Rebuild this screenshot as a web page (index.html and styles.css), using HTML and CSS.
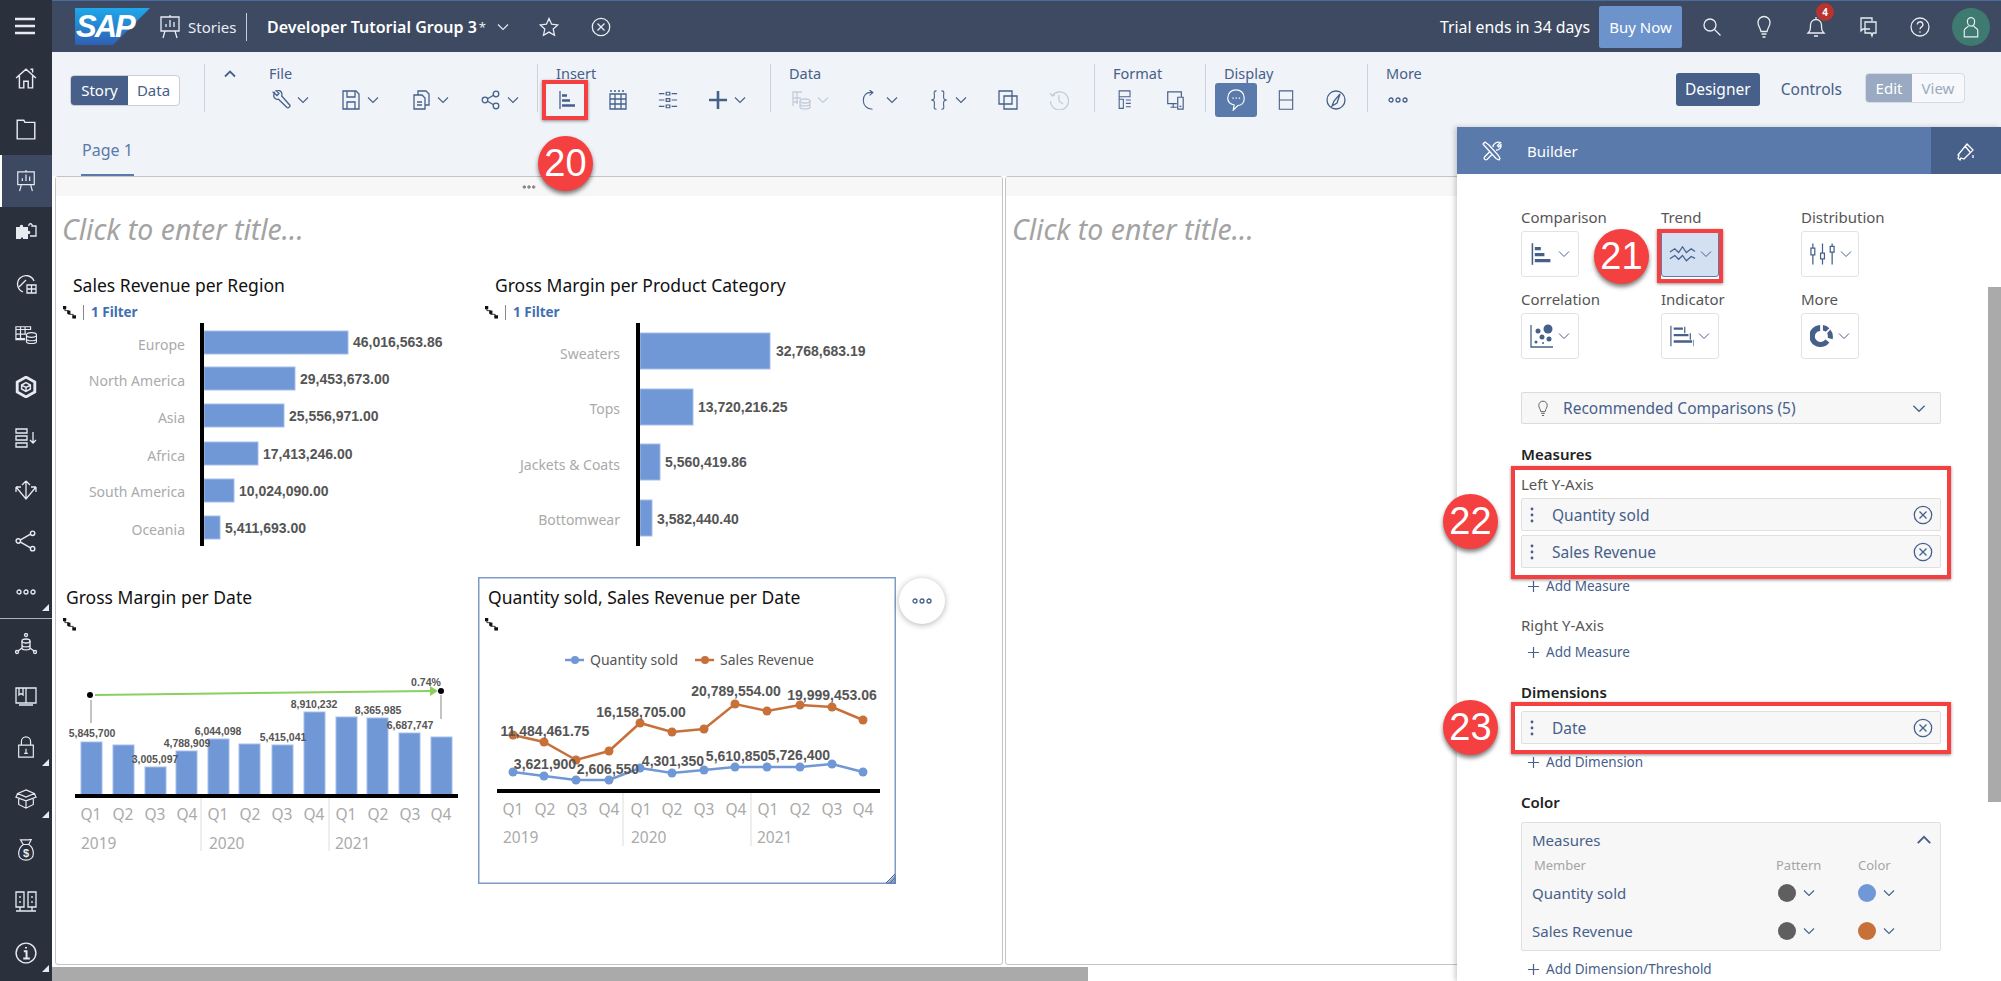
FILE: index.html
```html
<!DOCTYPE html>
<html lang="en">
<head>
    <meta charset="UTF-8">
    <meta name="viewport" content="width=device-width, initial-scale=1.0">
    <title>Developer Tutorial Group 3 - Stories</title>
    <link rel="stylesheet" href="styles.css">
</head>
<body>
<svg class="sprite" aria-hidden="true">
    <symbol id="i-chev" viewBox="0 0 12 8"><path d="M1 1.5l5 5 5-5"/></symbol>
    <symbol id="i-menu" viewBox="0 0 20 20"><path class="thick" d="M0 3h20M0 10h20M0 17h20"/></symbol>
    <symbol id="i-stories" viewBox="0 0 20 24"><path d="M1 2h18v14H1zM10 0v2M5 16l-2 7M15 16l2 7M6 12V9M10 12V5M14 12V7"/></symbol>
    <symbol id="i-star" viewBox="0 0 20 20"><path d="M10 1.5l2.6 5.7 6.2.7-4.6 4.2 1.3 6.1L10 15.100l-5.500 3.100 1.300-6.100L1.200 7.900l6.200-.7z"/></symbol>
    <symbol id="i-xcircle" viewBox="0 0 20 20"><circle cx="10" cy="10" r="8.700"/><path d="M6.500 6.500l7 7M13.500 6.500l-7 7"/></symbol>
    <symbol id="i-search" viewBox="0 0 20 20"><circle cx="8" cy="8" r="6"/><path d="M12.500 12.500l6 6"/></symbol>
    <symbol id="i-bulb" viewBox="0 0 20 24"><path d="M7 16.500C6 12 4 11 4 7.500a6 6 0 0 1 12 0c0 3.500-2 4.500-3 9zM7.500 19h5M8.500 22h3"/></symbol>
    <symbol id="i-bell" viewBox="0 0 20 24"><path d="M2 18c2-2 2.500-3 2.500-8a5.500 5.500 0 0 1 11 0c0 5 .5 6 2.500 8zM8 21h4M10 2v2"/></symbol>
    <symbol id="i-chat" viewBox="0 0 20 22"><path d="M12 13H5l-2 2V2h11v3M7 6h11v11h-3l-1 3-1-3H7z"/></symbol>
    <symbol id="i-help" viewBox="0 0 20 20"><circle cx="10" cy="10" r="9"/><path d="M7.300 7.500a2.800 2.800 0 1 1 4 2.600c-.9.500-1.300 1-1.300 2.200M10 14.300v1.500"/></symbol>
    <symbol id="i-user" viewBox="0 0 20 28"><path d="M6 7.500a4 4 0 0 1 8 0c0 3-1.500 5.500-4 5.500S6 10.500 6 7.500zM7 13c-1 2-4.500 2-4.500 5v7h15v-7c0-3-3.500-3-4.500-5"/></symbol>
    <symbol id="i-wrench" viewBox="0 0 20 20"><path d="M2.500 2.500l3.500 3 2-2-3-3.200c3-.8 6 1 6 4.200l-.3 1.500 8 9c1 1.300-1.300 3.500-2.700 2.500l-8.500-8.300c-3 1-6.300-2.300-4-6.700z"/></symbol>
    <symbol id="i-save" viewBox="0 0 20 20"><path d="M2 1h13l3 3v15H2zM6 1v6h8V1M6 19v-7h8v7"/></symbol>
    <symbol id="i-copy" viewBox="0 0 20 20"><path d="M7 5V1h8l3 3v11h-4M3 5h8l3 3v11H3zM6 12h5M6 15h5"/></symbol>
    <symbol id="i-share" viewBox="0 0 20 20"><circle cx="4" cy="10" r="2.800"/><circle cx="15" cy="4" r="2.800"/><circle cx="15" cy="16" r="2.800"/><path d="M6.500 8.700L12.500 5.300M6.500 11.300l6 3.400"/></symbol>
    <symbol id="i-bars" viewBox="0 0 20 20"><path d="M2 1v18"/><path class="thick" d="M4 5.500h5M4 10.500h8M4 15.500h13"/></symbol>
    <symbol id="i-table" viewBox="0 0 20 20"><path d="M2 4h16v15H2zM2 9h16M2 14h16M7 4v15M13 4v15"/><path stroke-dasharray="2 2" d="M2 1h16"/></symbol>
    <symbol id="i-sliders" viewBox="0 0 22 20"><path d="M1 3h6M15 3h6M1 10h6M15 10h6M1 17h6M15 17h6M9 1.500h4v3H9zM9 8.500h4v3H9zM9 15.500h4v3H9z"/></symbol>
    <symbol id="i-plus" viewBox="0 0 20 20"><path class="thick" d="M10 1v18M1 10h18"/></symbol>
    <symbol id="i-plus-thin" viewBox="0 0 14 14"><path d="M7 1v12M1 7h12"/></symbol>
    <symbol id="i-db" viewBox="0 0 20 20"><path d="M2 16V2h9M2 8h8M2 12h5M6 2v12"/><ellipse cx="14" cy="11" rx="5" ry="2"/><path d="M9 11v6c0 2.600 10 2.600 10 0v-6M9 14c0 2.600 10 2.600 10 0"/></symbol>
    <symbol id="i-refresh" viewBox="0 0 20 24"><path d="M13 3C5 2 2 7 2 12.500S6 23 13 23M9.500 0l4 3-4 3.500"/></symbol>
    <symbol id="i-braces" viewBox="0 0 20 24"><path d="M7 1C3 1 4.500 4 4.500 7.500S4 11 1.500 12C4 13 4.500 13 4.500 16.500S3 23 7 23M13 1c4 0 2.500 3 2.500 6.500S16 11 18.500 12c-2.500 1-3 1-3 4.500S17 23 13 23"/></symbol>
    <symbol id="i-layers" viewBox="0 0 20 20"><path d="M1 1h13v13H1z"/><path d="M6 6h13v13H6z"/></symbol>
    <symbol id="i-history" viewBox="0 0 20 20"><path d="M3 6a9 9 0 1 1-1.500 5M1 3l2 3 3-1M10 5v6l4 3"/></symbol>
    <symbol id="i-format" viewBox="0 0 16 24"><path d="M1 1h13v7H1zM1 8v14h5V11H1M9 12h6M9 16h6M9 20h6"/></symbol>
    <symbol id="i-device" viewBox="0 0 20 22"><path d="M12 15H2V2h15v6M5 19h7M8 15v4M13 8h6v13h-6zM15 18h2"/></symbol>
    <symbol id="i-comment" viewBox="0 0 20 24"><path d="M10 1c5 0 9 3 9 9s-4 8-7 8l-5 5 1-5.500C4 16.500 1 14 1 10c0-6 4-9 9-9z"/><path stroke-dasharray="1.500 2" d="M6 10h9"/></symbol>
    <symbol id="i-split" viewBox="0 0 20 24"><path d="M2 1h16v22H2zM2 12h16"/></symbol>
    <symbol id="i-compass" viewBox="0 0 20 20"><circle cx="10" cy="10" r="9"/><path d="M14 4L8 11l-2 5 5-3z"/></symbol>
    <symbol id="i-dots" viewBox="0 0 20 6"><circle cx="3" cy="3" r="2"/><circle cx="10" cy="3" r="2"/><circle cx="17" cy="3" r="2"/></symbol>
    <symbol id="i-tools" viewBox="0 0 20 20"><path d="M1 3l2-2 4 3 9.500 10.500 1.500 3-1 1.500-3-1.500L4.500 7zM11 6c0-3 4-6 7.500-4.500L15.500 4.500l1 1.500 2.500-2.500c.5 3-2 6-5 5.500M7.500 11l-5 5c-1 2 1 3.500 2.500 2.500l5-5"/></symbol>
    <symbol id="i-brush" viewBox="0 0 20 20"><path d="M2 14L11 3l6 6-9 9-3-1-1 2-2-2 1-2zM9 5l5 6M17 14v3"/></symbol>
    <symbol id="i-trend" viewBox="0 0 28 20"><path d="M1 8l5-3.500 4 4 4-6 4 6 5-4 4 3M1 15l5-3.500 4 4 4-4 4 5.500 5-4.500 4 2"/></symbol>
    <symbol id="i-candles" viewBox="0 0 28 24"><path d="M4 1v5M4 13v10M14 1v10M14 17v6M24 1v3M24 10v13M2 6h4v7H2zM12 11h4v6h-4zM22 4h4v6h-4z"/></symbol>
    <symbol id="i-scatter" viewBox="0 0 24 24"><path d="M1 1v22h22"/><g class="solid"><circle cx="18" cy="5" r="4.500"/><circle cx="8" cy="7" r="2.500"/><circle cx="12" cy="13" r="2.500"/><circle cx="19" cy="15" r="2.500"/><circle cx="6" cy="18" r="1.500"/><circle cx="13" cy="19" r="1"/></g></symbol>
    <symbol id="i-indicator" viewBox="0 0 26 24"><path d="M1 1v22M16 2v7M22 9v7M26 16v7"/><path class="thick" d="M4 4h10M4 11h16M4 18h20"/></symbol>
    <symbol id="i-donut" viewBox="0 0 26 26"><path class="solid" d="M11 1a12 12 0 1 0 10 19l-4.500-3.500a6 6 0 1 1-5.500-9zM14 1a12 12 0 0 1 7 3.500l-4 4a6 6 0 0 0-3-1.500zM22 6a12 12 0 0 1 2.500 10.500L19 15a6 6 0 0 0-.5-5z"/></symbol>
    <symbol id="i-grip" viewBox="0 0 4 16"><circle cx="2" cy="2" r="1.400"/><circle cx="2" cy="8" r="1.400"/><circle cx="2" cy="14" r="1.400"/></symbol>
    <symbol id="i-tree" viewBox="0 0 14 14"><path d="M2 2v3h4v4h5v3"/><rect class="solid" x="0" y="0" width="3.500" height="3.500"/><rect class="solid" x="4.500" y="5" width="3.500" height="3.500"/><rect class="solid" x="10" y="10" width="4" height="3.500"/></symbol>
    <symbol id="i-home" viewBox="0 0 20 20"><path d="M1 10l9-8 9 8M4 8v11h4v-6h4v6h4V8M14 2h2v3"/></symbol>
    <symbol id="i-folder" viewBox="0 0 20 20"><path d="M2 2h6l1 2h9v15H2z"/></symbol>
    <symbol id="i-puzzle" viewBox="0 0 22 20"><path class="solid" d="M1 5h4c-1-3 4-3 3 0h5v4c3-1 3 4 0 3v5H8c1-2-3-2-2 0H1z"/><path d="M14 4c-1-3 4-3 3 0h4v10h-6"/></symbol>
    <symbol id="i-gauge" viewBox="0 0 22 20"><path d="M8 18A8.500 8.500 0 1 1 19 7M4 13l7-7"/><path d="M12 11h9v8h-9zM12 15h9M16.500 11v8"/></symbol>
    <symbol id="i-datatable" viewBox="0 0 24 20"><path d="M1 1h16v3H1zM1 4v11h10M1 9h11M1 14h10M6 1v14M11 1v8"/><ellipse cx="18" cy="10" rx="5.500" ry="2.500"/><path d="M12.500 10v7c0 3 11 3 11 0v-7M12.500 14c0 3 11 3 11 0"/></symbol>
    <symbol id="i-hex" viewBox="0 0 20 20"><path class="thick" d="M10 1l8 4.500v9L10 19l-8-4.500v-9z"/><path d="M10 6l4 2.200v3.600L10 14l-4-2.200V8.200zM6 8.200l4 2.200 4-2.200M10 10.400V14"/></symbol>
    <symbol id="i-sortlist" viewBox="0 0 22 20"><path d="M1 1h11v4H1zM1 8h11v4H1zM1 15h11v4H1zM18 4v11M15 12l3 3 3-3"/></symbol>
    <symbol id="i-arrows" viewBox="0 0 22 20"><path d="M11 1v18M11 1L7 5M11 1l4 4M1 7l10 12 10-12M1 7v5M1 7h5M21 7v5M21 7h-5"/></symbol>
    <symbol id="i-network" viewBox="0 0 20 20"><circle cx="3" cy="10" r="2"/><circle cx="16" cy="3" r="2"/><circle cx="16" cy="17" r="2"/><path d="M5 9l9.500-5.500M5 11l9.500 5.500"/></symbol>
    <symbol id="i-dbnet" viewBox="0 0 22 22"><circle cx="11" cy="2" r="1.500"/><ellipse cx="11" cy="8" rx="4" ry="2"/><path d="M7 8v7c0 2.500 8 2.500 8 0V8M7 12c0 2.500 8 2.500 8 0M7 15l-4 3M15 15l4 3"/><circle cx="2" cy="19" r="1.500"/><circle cx="20" cy="19" r="1.500"/></symbol>
    <symbol id="i-book" viewBox="0 0 22 20"><path d="M1 2h20v15H1zM11 2v15M4 19h14M4 2v7l2-1.500L8 9V2"/></symbol>
    <symbol id="i-lock" viewBox="0 0 18 24"><path d="M1 10h16v13H1zM4 10V6a5 5 0 0 1 10 0v4M9 14v5M7 19h4"/></symbol>
    <symbol id="i-box" viewBox="0 0 24 22"><path d="M12 1l9 4-9 4-9-4zM3 5l-2 4 11 4 11-4-2-4M4 11v6l8 4 8-4v-6M12 13v8"/></symbol>
    <symbol id="i-money" viewBox="0 0 18 24"><path d="M6 6L3 1h9l3-1-3 6c5 3 5 8 5 10 0 5-4 7-8 7s-8-2-8-7c0-3 1-7 5-10zM6 6h6"/><text x="9" y="20" class="dollar">$</text></symbol>
    <symbol id="i-speakers" viewBox="0 0 22 22"><path d="M1 1h8v15H1zM13 1h8v15h-8zM5 16v4M17 16v4M1 20h20M5 5v2M17 5v2M5 10v2M17 10v2"/></symbol>
    <symbol id="i-info" viewBox="0 0 20 20"><circle cx="10" cy="10" r="9"/><path class="thick-sm" d="M8 8.500h2.500V15M7.500 15h6M10 4.500v1.500"/></symbol>
</svg>

<div class="app">
    <nav class="sidebar">
        <div class="side-top"><svg class="side-menu"><use href="#i-menu"/></svg></div>
        <a class="side-item"><svg><use href="#i-home"/></svg></a>
        <a class="side-item"><svg><use href="#i-folder"/></svg></a>
        <a class="side-item side-active"><svg><use href="#i-stories"/></svg></a>
        <a class="side-item"><svg><use href="#i-puzzle"/></svg></a>
        <a class="side-item"><svg><use href="#i-gauge"/></svg></a>
        <a class="side-item"><svg><use href="#i-datatable"/></svg></a>
        <a class="side-item"><svg><use href="#i-hex"/></svg></a>
        <a class="side-item"><svg><use href="#i-sortlist"/></svg></a>
        <a class="side-item"><svg><use href="#i-arrows"/></svg></a>
        <a class="side-item"><svg><use href="#i-network"/></svg></a>
        <a class="side-item side-more side-split"><svg class="side-dots"><use href="#i-dots"/></svg></a>
        <a class="side-item"><svg><use href="#i-dbnet"/></svg></a>
        <a class="side-item"><svg><use href="#i-book"/></svg></a>
        <a class="side-item side-more"><svg><use href="#i-lock"/></svg></a>
        <a class="side-item side-more"><svg><use href="#i-box"/></svg></a>
        <a class="side-item"><svg><use href="#i-money"/></svg></a>
        <a class="side-item"><svg><use href="#i-speakers"/></svg></a>
        <a class="side-item side-more"><svg><use href="#i-info"/></svg></a>
    </nav>

    <div class="main">
        <header class="topbar">
            <svg class="logo" viewBox="0 0 75 37">
                <defs>
                    <linearGradient id="logoFill" x1="0" y1="0" x2="0" y2="1">
                        <stop offset="0" stop-color="#1fa8ea"/>
                        <stop offset="1" stop-color="#2f5fb5"/>
                    </linearGradient>
                </defs>
                <polygon points="0,0 75,0 38,37 0,37" fill="url(#logoFill)"/>
                <text x="1" y="29" class="logo-text">SAP</text>
            </svg>
            <svg class="top-stories"><use href="#i-stories"/></svg>
            <span class="top-section">Stories</span>
            <span class="top-title">Developer Tutorial Group 3</span>
            <span class="top-star">*</span>
            <svg class="chev top-chev"><use href="#i-chev"/></svg>
            <svg class="top-icon top-fav"><use href="#i-star"/></svg>
            <svg class="top-icon top-close"><use href="#i-xcircle"/></svg>
            <span class="trial">Trial ends in 34 days</span>
            <button class="buy">Buy Now</button>
            <svg class="top-icon top-search"><use href="#i-search"/></svg>
            <svg class="top-icon top-tall"><use href="#i-bulb"/></svg>
            <span class="bell">
                <svg class="top-icon top-tall"><use href="#i-bell"/></svg>
                <span class="badge">4</span>
            </span>
            <svg class="top-icon top-tall top-chat"><use href="#i-chat"/></svg>
            <svg class="top-icon"><use href="#i-help"/></svg>
            <span class="avatar"><svg><use href="#i-user"/></svg></span>
        </header>

        <section class="toolbar">
            <div class="seg seg-story">
                <span class="seg-on">Story</span>
                <span class="seg-off">Data</span>
            </div>
            <div class="tb-group tb-file">
                <svg class="chev tb-collapse"><use href="#i-chev"/></svg>
                <div class="tb-label">File</div>
                <div class="tb-row tb-row-file">
                    <span class="tool"><svg><use href="#i-wrench"/></svg><svg class="chev"><use href="#i-chev"/></svg></span>
                    <span class="tool"><svg><use href="#i-save"/></svg><svg class="chev"><use href="#i-chev"/></svg></span>
                    <span class="tool"><svg><use href="#i-copy"/></svg><svg class="chev"><use href="#i-chev"/></svg></span>
                    <span class="tool"><svg><use href="#i-share"/></svg><svg class="chev"><use href="#i-chev"/></svg></span>
                </div>
            </div>
            <div class="tb-group tb-insert">
                <div class="tb-label">Insert</div>
                <div class="tb-row">
                    <span class="tool"><svg><use href="#i-bars"/></svg></span>
                    <span class="tool"><svg><use href="#i-table"/></svg></span>
                    <span class="tool"><svg><use href="#i-sliders"/></svg></span>
                    <span class="tool"><svg><use href="#i-plus"/></svg><svg class="chev"><use href="#i-chev"/></svg></span>
                </div>
            </div>
            <div class="tb-group tb-data">
                <div class="tb-label">Data</div>
                <div class="tb-row tb-row-data">
                    <span class="tool tool-off"><svg><use href="#i-db"/></svg><svg class="chev"><use href="#i-chev"/></svg></span>
                    <span class="tool"><svg><use href="#i-refresh"/></svg><svg class="chev"><use href="#i-chev"/></svg></span>
                    <span class="tool"><svg><use href="#i-braces"/></svg><svg class="chev"><use href="#i-chev"/></svg></span>
                    <span class="tool"><svg><use href="#i-layers"/></svg></span>
                    <span class="tool tool-off"><svg><use href="#i-history"/></svg></span>
                </div>
            </div>
            <div class="tb-group tb-format">
                <div class="tb-label">Format</div>
                <div class="tb-row">
                    <span class="tool"><svg><use href="#i-format"/></svg></span>
                    <span class="tool"><svg><use href="#i-device"/></svg></span>
                </div>
            </div>
            <div class="tb-group tb-display">
                <div class="tb-label">Display</div>
                <div class="tb-row">
                    <span class="tool tool-active"><svg><use href="#i-comment"/></svg></span>
                    <span class="tool"><svg><use href="#i-split"/></svg></span>
                    <span class="tool"><svg><use href="#i-compass"/></svg></span>
                </div>
            </div>
            <div class="tb-group tb-more">
                <div class="tb-label">More</div>
                <div class="tb-row"><svg class="tb-dots"><use href="#i-dots"/></svg></div>
            </div>
            <div class="tb-right">
                <span class="mode-on">Designer</span>
                <span class="mode-off">Controls</span>
                <div class="seg seg-edit">
                    <span class="seg-edit-on">Edit</span>
                    <span class="seg-edit-off">View</span>
                </div>
            </div>
        </section>

        <div class="tabs"><span class="tab">Page 1</span></div>

        <div class="canvas">
            <section class="story-panel">
                <div class="handle"><svg class="handle-dots"><use href="#i-dots"/></svg></div>
                <div class="placeholder">Click to enter title...</div>
                <div class="widgets">
                    <article class="widget">
                        <h2 class="w-title w-title-inset">Sales Revenue per Region</h2>
                        <div class="w-sub"><svg class="tree"><use href="#i-tree"/></svg><span class="w-filter">1 Filter</span></div>
                        <svg class="chart" viewBox="56 322 422 250">
                            <rect class="bar" x="204" y="331" width="144" height="23"/>
                            <rect class="bar" x="204" y="367" width="91" height="23"/>
                            <rect class="bar" x="204" y="404" width="80" height="23"/>
                            <rect class="bar" x="204" y="442" width="54" height="23"/>
                            <rect class="bar" x="204" y="479" width="30" height="23"/>
                            <rect class="bar" x="204" y="516" width="16" height="23"/>
                            <rect class="axis" x="200" y="323" width="4" height="223"/>
                            <text class="cat-bar end" x="185" y="350">Europe</text>
                            <text class="cat-bar end" x="185" y="386">North America</text>
                            <text class="cat-bar end" x="185" y="423">Asia</text>
                            <text class="cat-bar end" x="185" y="461">Africa</text>
                            <text class="cat-bar end" x="185" y="497">South America</text>
                            <text class="cat-bar end" x="185" y="535">Oceania</text>
                            <text class="val" x="353" y="347">46,016,563.86</text>
                            <text class="val" x="300" y="384">29,453,673.00</text>
                            <text class="val" x="289" y="421">25,556,971.00</text>
                            <text class="val" x="263" y="459">17,413,246.00</text>
                            <text class="val" x="239" y="496">10,024,090.00</text>
                            <text class="val" x="225" y="533">5,411,693.00</text>
                        </svg>
                    </article>

                    <article class="widget">
                        <h2 class="w-title w-title-inset">Gross Margin per Product Category</h2>
                        <div class="w-sub"><svg class="tree"><use href="#i-tree"/></svg><span class="w-filter">1 Filter</span></div>
                        <svg class="chart" viewBox="478 322 418 250">
                            <rect class="bar" x="640" y="333" width="130" height="36"/>
                            <rect class="bar" x="640" y="389" width="53" height="36"/>
                            <rect class="bar" x="640" y="444" width="20" height="36"/>
                            <rect class="bar" x="640" y="500" width="12" height="36"/>
                            <rect class="axis" x="636" y="323" width="4" height="223"/>
                            <text class="cat-bar end" x="620" y="359">Sweaters</text>
                            <text class="cat-bar end" x="620" y="414">Tops</text>
                            <text class="cat-bar end" x="620" y="470">Jackets &amp; Coats</text>
                            <text class="cat-bar end" x="620" y="525">Bottomwear</text>
                            <text class="val" x="776" y="356">32,768,683.19</text>
                            <text class="val" x="698" y="412">13,720,216.25</text>
                            <text class="val" x="665" y="467">5,560,419.86</text>
                            <text class="val" x="657" y="524">3,582,440.40</text>
                        </svg>
                    </article>

                    <article class="widget widget-low">
                        <h2 class="w-title">Gross Margin per Date</h2>
                        <div class="w-sub"><svg class="tree"><use href="#i-tree"/></svg></div>
                        <svg class="chart" viewBox="56 634 422 250">
                            <rect class="bar" x="81" y="742" width="21" height="53"/>
                            <rect class="bar" x="113" y="745" width="21" height="50"/>
                            <rect class="bar" x="145" y="767" width="21" height="28"/>
                            <rect class="bar" x="176" y="751" width="21" height="44"/>
                            <rect class="bar" x="208" y="739" width="21" height="56"/>
                            <rect class="bar" x="239" y="744" width="21" height="51"/>
                            <rect class="bar" x="272" y="745" width="21" height="50"/>
                            <rect class="bar" x="304" y="712" width="21" height="83"/>
                            <rect class="bar" x="336" y="717" width="21" height="78"/>
                            <rect class="bar" x="367" y="718" width="21" height="77"/>
                            <rect class="bar" x="399" y="733" width="21" height="62"/>
                            <rect class="bar" x="431" y="737" width="21" height="58"/>
                            <rect class="axis" x="75" y="794" width="383" height="4"/>
                            <path class="var-drop" d="M91 700v23M441 695v24"/>
                            <path class="var-line" d="M95 695L430 691"/>
                            <polygon class="var-head" points="430,686 438,691 430,696"/>
                            <circle cx="90" cy="695" r="3"/>
                            <circle cx="441" cy="691" r="3"/>
                            <text class="small mid" x="426" y="686">0.74%</text>
                            <text class="small mid" x="92" y="737">5,845,700</text>
                            <text class="small mid" x="155" y="763">3,005,097</text>
                            <text class="small mid" x="187" y="747">4,788,909</text>
                            <text class="small mid" x="218" y="735">6,044,098</text>
                            <text class="small mid" x="283" y="741">5,415,041</text>
                            <text class="small mid" x="314" y="708">8,910,232</text>
                            <text class="small mid" x="378" y="714">8,365,985</text>
                            <text class="small mid" x="410" y="729">6,687,747</text>
                            <g class="cat mid">
                                <text x="91" y="820">Q1</text><text x="123" y="820">Q2</text><text x="155" y="820">Q3</text><text x="187" y="820">Q4</text>
                                <text x="218" y="820">Q1</text><text x="250" y="820">Q2</text><text x="282" y="820">Q3</text><text x="314" y="820">Q4</text>
                                <text x="346" y="820">Q1</text><text x="378" y="820">Q2</text><text x="410" y="820">Q3</text><text x="441" y="820">Q4</text>
                            </g>
                            <text class="cat" x="81" y="849">2019</text>
                            <text class="cat" x="209" y="849">2020</text>
                            <text class="cat" x="335" y="849">2021</text>
                            <path class="sep" d="M201 798v53M329 798v53"/>
                        </svg>
                    </article>

                    <article class="widget widget-low widget-selected">
                        <h2 class="w-title">Quantity sold, Sales Revenue per Date</h2>
                        <div class="w-sub"><svg class="tree"><use href="#i-tree"/></svg></div>
                        <svg class="chart" viewBox="478 634 418 250">
                            <path class="leg-blue" d="M565 660h19"/>
                            <circle class="pt-blue" cx="575" cy="660" r="4"/>
                            <text class="legend" x="590" y="665">Quantity sold</text>
                            <path class="leg-orange" d="M695 660h19"/>
                            <circle class="pt-orange" cx="705" cy="660" r="4"/>
                            <text class="legend" x="720" y="665">Sales Revenue</text>
                            <polyline class="line-orange" points="513,735 544,742 576,760 609,751 640,723 672,732 704,729 735,704 767,711 800,705 832,707 863,720"/>
                            <polyline class="line-blue" points="513,772 544,776 576,780 609,780 640,768 672,773 704,770 735,767 767,767 800,767 832,764 863,772"/>
                            <g class="pt-orange">
                                <circle cx="513" cy="735" r="4.500"/><circle cx="544" cy="742" r="4.500"/><circle cx="576" cy="760" r="4.500"/><circle cx="609" cy="751" r="4.500"/>
                                <circle cx="640" cy="723" r="4.500"/><circle cx="672" cy="732" r="4.500"/><circle cx="704" cy="729" r="4.500"/><circle cx="735" cy="704" r="4.500"/>
                                <circle cx="767" cy="711" r="4.500"/><circle cx="800" cy="705" r="4.500"/><circle cx="832" cy="707" r="4.500"/><circle cx="863" cy="720" r="4.500"/>
                            </g>
                            <g class="pt-blue">
                                <circle cx="513" cy="772" r="4.500"/><circle cx="544" cy="776" r="4.500"/><circle cx="576" cy="780" r="4.500"/><circle cx="609" cy="780" r="4.500"/>
                                <circle cx="640" cy="768" r="4.500"/><circle cx="672" cy="773" r="4.500"/><circle cx="704" cy="770" r="4.500"/><circle cx="735" cy="767" r="4.500"/>
                                <circle cx="767" cy="767" r="4.500"/><circle cx="800" cy="767" r="4.500"/><circle cx="832" cy="764" r="4.500"/><circle cx="863" cy="772" r="4.500"/>
                            </g>
                            <g class="val mid">
                                <text x="545" y="736">11,484,461.75</text>
                                <text x="641" y="717">16,158,705.00</text>
                                <text x="736" y="696">20,789,554.00</text>
                                <text x="832" y="700">19,999,453.06</text>
                                <text x="545" y="769">3,621,900</text>
                                <text x="608" y="774">2,606,550</text>
                                <text x="673" y="766">4,301,350</text>
                                <text x="737" y="761">5,610,850</text>
                                <text x="799" y="760">5,726,400</text>
                            </g>
                            <rect class="axis" x="497" y="789" width="383" height="4"/>
                            <g class="cat mid">
                                <text x="513" y="815">Q1</text><text x="545" y="815">Q2</text><text x="577" y="815">Q3</text><text x="609" y="815">Q4</text>
                                <text x="641" y="815">Q1</text><text x="672" y="815">Q2</text><text x="704" y="815">Q3</text><text x="736" y="815">Q4</text>
                                <text x="768" y="815">Q1</text><text x="800" y="815">Q2</text><text x="832" y="815">Q3</text><text x="863" y="815">Q4</text>
                            </g>
                            <text class="cat" x="503" y="843">2019</text>
                            <text class="cat" x="631" y="843">2020</text>
                            <text class="cat" x="757" y="843">2021</text>
                            <path class="sep" d="M623 793v53M751 793v53"/>
                            <path class="grab" d="M886 883l9-9M890 883l5-5"/>
                            <polygon class="grab-fill" points="896,874 896,884 886,884"/>
                        </svg>
                        <button class="w-more"><svg><use href="#i-dots"/></svg></button>
                    </article>
                </div>
            </section>
            <section class="story-panel story-panel-second">
                <div class="handle"></div>
                <div class="placeholder">Click to enter title...</div>
            </section>
        </div>
        <div class="hscroll"><div class="hscroll-thumb"></div></div>

        <aside class="builder">
            <div class="b-head">
                <svg class="b-tools"><use href="#i-tools"/></svg>
                <span class="b-name">Builder</span>
                <span class="b-brush"><svg><use href="#i-brush"/></svg></span>
            </div>
            <div class="b-body">
                <div class="b-types">
                    <div class="b-type">Comparison<span class="b-pick"><svg><use href="#i-bars"/></svg><svg class="chev"><use href="#i-chev"/></svg></span></div>
                    <div class="b-type">Trend<span class="b-pick b-pick-on"><svg class="wide"><use href="#i-trend"/></svg><svg class="chev"><use href="#i-chev"/></svg></span></div>
                    <div class="b-type">Distribution<span class="b-pick"><svg class="wide"><use href="#i-candles"/></svg><svg class="chev"><use href="#i-chev"/></svg></span></div>
                    <div class="b-type">Correlation<span class="b-pick"><svg><use href="#i-scatter"/></svg><svg class="chev"><use href="#i-chev"/></svg></span></div>
                    <div class="b-type">Indicator<span class="b-pick"><svg><use href="#i-indicator"/></svg><svg class="chev"><use href="#i-chev"/></svg></span></div>
                    <div class="b-type">More<span class="b-pick"><svg><use href="#i-donut"/></svg><svg class="chev"><use href="#i-chev"/></svg></span></div>
                </div>
                <div class="b-rec">
                    <svg class="b-bulb"><use href="#i-bulb"/></svg>
                    <span>Recommended Comparisons (5)</span>
                    <svg class="chev b-rec-chev"><use href="#i-chev"/></svg>
                </div>
                <h3 class="b-h b-h-measures">Measures</h3>
                <div class="b-sub b-sub-left">Left Y-Axis</div>
                <div class="chip"><svg class="grip"><use href="#i-grip"/></svg><span>Quantity sold</span><svg class="chip-x"><use href="#i-xcircle"/></svg></div>
                <div class="chip chip-next"><svg class="grip"><use href="#i-grip"/></svg><span>Sales Revenue</span><svg class="chip-x"><use href="#i-xcircle"/></svg></div>
                <div class="b-add"><svg><use href="#i-plus-thin"/></svg>Add Measure</div>
                <div class="b-sub b-sub-right">Right Y-Axis</div>
                <div class="b-add b-add-right"><svg><use href="#i-plus-thin"/></svg>Add Measure</div>
                <h3 class="b-h b-h-dim">Dimensions</h3>
                <div class="chip"><svg class="grip"><use href="#i-grip"/></svg><span>Date</span><svg class="chip-x"><use href="#i-xcircle"/></svg></div>
                <div class="b-add"><svg><use href="#i-plus-thin"/></svg>Add Dimension</div>
                <h3 class="b-h b-h-color">Color</h3>
                <div class="color-box">
                    <div class="color-head"><span>Measures</span><svg class="chev color-up"><use href="#i-chev"/></svg></div>
                    <div class="color-cols"><span class="c-member">Member</span><span class="c-pattern">Pattern</span><span class="c-color">Color</span></div>
                    <div class="color-row">
                        <span class="c-member">Quantity sold</span>
                        <span class="c-pattern"><i class="dot dot-grey"></i><svg class="chev"><use href="#i-chev"/></svg></span>
                        <span class="c-color"><i class="dot dot-blue"></i><svg class="chev"><use href="#i-chev"/></svg></span>
                    </div>
                    <div class="color-row">
                        <span class="c-member">Sales Revenue</span>
                        <span class="c-pattern"><i class="dot dot-grey"></i><svg class="chev"><use href="#i-chev"/></svg></span>
                        <span class="c-color"><i class="dot dot-orange"></i><svg class="chev"><use href="#i-chev"/></svg></span>
                    </div>
                </div>
                <div class="b-add b-add-last"><svg><use href="#i-plus-thin"/></svg>Add Dimension/Threshold</div>
            </div>
            <div class="vscroll"></div>
        </aside>

        <!-- tutorial callouts -->
        <div class="mark mark-20"></div>
        <div class="mark mark-21"></div>
        <div class="mark mark-22"></div>
        <div class="mark mark-23"></div>
        <div class="step step-20">20</div>
        <div class="step step-21">21</div>
        <div class="step step-22">22</div>
        <div class="step step-23">23</div>
    </div>
</div>
</body>
</html>
```

FILE: styles.css
```css
* {
    box-sizing: border-box;
}
body {
    margin: 0;
    font-family: "Noto Sans", Arial, sans-serif;
    color: #46608a;
    background: #fff;
}
.sprite {
    display: none;
}
svg {
    fill: none;
    stroke: currentColor;
    stroke-width: 1.3;
}
.thick {
    stroke-width: 2.6;
}
.thick-sm {
    stroke-width: 1.8;
}
.solid {
    fill: currentColor;
    stroke: none;
}
.app {
    display: flex;
    width: 2001px;
    height: 981px;
    overflow: hidden;
}

/* left nav */
.sidebar {
    flex: 0 0 52px;
    background: #2a313d;
    color: #e6ebf2;
}
.side-top {
    height: 52px;
    display: flex;
    align-items: center;
    justify-content: center;
}
.side-menu {
    width: 20px;
    height: 20px;
    margin-right: 2px;
}
.side-item {
    position: relative;
    display: flex;
    align-items: center;
    justify-content: center;
    height: 51.5px;
}
.side-item svg {
    width: 22px;
    height: 22px;
}
.side-item .side-dots {
    height: 6px;
    width: 20px;
    fill: none;
}
.side-active {
    background: #3c4960;
    border-left: 2px solid #fff;
    padding-right: 2px;
}
.side-split {
    border-bottom: 1px solid #aab2bf;
}
.side-more::after {
    content: "";
    position: absolute;
    right: 3px;
    bottom: 7px;
    border-style: solid;
    border-width: 0 0 7px 7px;
    border-color: transparent transparent #e6ebf2 transparent;
}
.dollar {
    font: 700 12px "Liberation Sans", Arial, sans-serif;
    text-anchor: middle;
    fill: currentColor;
    stroke: none;
}

/* shell bar */
.main {
    position: relative;
    flex: 1;
    min-width: 0;
    background: #f0f3f8;
}
.topbar {
    display: flex;
    align-items: center;
    height: 52px;
    padding-left: 23px;
    background: #3d4a61;
    border-top: 1px solid #4b6a9d;
    color: #e9edf4;
}
.logo {
    width: 75px;
    height: 37px;
    stroke: none;
    flex: none;
}
.logo-text {
    font: italic 700 31px "Liberation Sans", Arial, sans-serif;
    letter-spacing: -2px;
    fill: #fff;
}
.top-stories {
    width: 20px;
    height: 24px;
    margin-left: 10px;
}
.top-section {
    margin-left: 8px;
    font-size: 15px;
    width: 59px;
    border-right: 1px solid #c8cfdb;
    line-height: 28px;
}
.top-title {
    margin-left: 20px;
    font-size: 16px;
    font-weight: 600;
    color: #fff;
    white-space: nowrap;
}
.top-star {
    margin-left: 2px;
    font-size: 13px;
}
.top-chev {
    margin-left: 11px;
}
.chev {
    flex: none;
    width: 12px;
    height: 8px;
    stroke-width: 1.1;
}
.top-icon {
    flex: none;
    width: 20px;
    height: 20px;
}
.top-tall {
    height: 24px;
}
.top-fav {
    margin-left: 30px;
}
.top-close {
    margin-left: 32px;
}
.trial {
    margin-left: auto;
    font-size: 15.800px;
    color: #fff;
    white-space: nowrap;
}
.buy {
    height: 42px;
    width: 83px;
    margin: 0 0 0 9px;
    padding: 0;
    border: 0;
    border-radius: 2px;
    background: #6c93cb;
    color: #fff;
    font: 15px "Noto Sans", Arial, sans-serif;
}
.top-search {
    margin: 0 32px 0 20px;
}
.bell {
    position: relative;
    display: flex;
    margin: 0 32px;
}
.top-chat {
    margin-right: 32px;
}
.badge {
    position: absolute;
    top: -12px;
    left: 10px;
    width: 18px;
    height: 18px;
    border-radius: 50%;
    background: #b8342f;
    color: #fff;
    font-size: 10px;
    font-weight: 700;
    line-height: 18px;
    text-align: center;
}
.avatar {
    display: flex;
    align-items: center;
    justify-content: center;
    width: 38px;
    height: 38px;
    margin: 0 11px 0 22px;
    border-radius: 50%;
    background: #3f7a70;
}
.avatar svg {
    width: 18px;
    height: 26px;
}

/* toolbar */
.toolbar {
    display: flex;
    align-items: flex-start;
    height: 80px;
    padding: 12px 36px 0 18px;
}
.seg {
    display: flex;
    flex: none;
    font-size: 15px;
    border-radius: 4px;
}
.seg-story {
    width: 110px;
    height: 31px;
    margin: 11px 24px 0 0;
    line-height: 29px;
    text-align: center;
    background: #fff;
    border: 1px solid #c9ced6;
}
.seg-on {
    width: 57px;
    background: #46608a;
    color: #fff;
    border-radius: 3px 0 0 3px;
}
.seg-off {
    flex: 1;
}
.tb-group {
    position: relative;
    flex: none;
    height: 48px;
    padding-left: 20px;
    border-left: 1px solid #ccd1da;
}
.tb-label {
    height: 18px;
    margin-left: -2px;
    font-size: 14.500px;
    line-height: 18px;
}
.tb-row {
    display: flex;
    align-items: center;
    gap: 30px;
    height: 20px;
    margin-top: 8px;
}
.tb-row-file {
    gap: 32px;
}
.tb-row-data {
    gap: 31px;
}
.tool {
    display: flex;
    align-items: center;
    gap: 6px;
}
.tool svg {
    width: 20px;
    height: 20px;
}
.tool .chev {
    width: 12px;
    height: 8px;
}
.tool-off {
    color: #c3ccd9;
}
.tool-active {
    margin: -8px -11px;
    padding: 6px 11px;
    border-radius: 3px;
    background: #5a7aab;
    color: #fff;
}
.tool-active svg {
    height: 22px;
}
.tb-file {
    padding-left: 66px;
    padding-right: 18px;
}
.tb-collapse {
    position: absolute;
    left: 19px;
    top: 6px;
    width: 12px;
    height: 8px;
    transform: scaleY(-1);
    stroke-width: 1.800;
}
.tb-insert {
    padding-right: 24px;
}
.tb-data {
    padding-right: 25px;
}
.tb-format {
    padding-right: 20px;
}
.tb-display {
    padding-right: 21px;
}
.tb-dots {
    width: 20px;
    height: 6px;
}
.tb-right {
    display: flex;
    align-items: flex-start;
    margin-left: auto;
    font-size: 15.500px;
}
.mode-on {
    width: 84px;
    height: 33px;
    margin-top: 9px;
    background: #46608a;
    color: #fff;
    line-height: 33px;
    text-align: center;
    border-radius: 3px;
}
.mode-off {
    margin: 9px 23px 0 21px;
    line-height: 33px;
}
.seg-edit {
    width: 100px;
    height: 30px;
    margin-top: 9px;
    line-height: 28px;
    text-align: center;
    background: #f6f8fb;
    border: 1px solid #d7dce4;
}
.seg-edit-on {
    width: 46px;
    background: #9aaac2;
    color: #fff;
    border-radius: 3px 0 0 3px;
}
.seg-edit-off {
    flex: 1;
    color: #9aaac2;
}

/* page tab */
.tabs {
    height: 44px;
    padding: 6px 0 0 29px;
}
.tab {
    display: inline-block;
    height: 38px;
    padding: 0 1px;
    font-size: 16px;
    line-height: 24px;
    color: #5a7aab;
    border-bottom: 2px solid #5a7aab;
}

/* story canvas */
.canvas {
    display: flex;
    gap: 2px;
    height: 789px;
    padding-left: 3px;
    background: #fff;
}
.story-panel {
    flex: 0 0 948px;
    border: 1px solid #c4c4c4;
    border-radius: 3px;
    background: #fff;
}
.story-panel-second {
    flex: 1 0 500px;
}
.handle {
    display: flex;
    justify-content: center;
    align-items: center;
    height: 19px;
    background: #f7f7f7;
}
.handle-dots {
    width: 20px;
    height: 4px;
    color: #8a8a8a;
    fill: #8a8a8a;
}
.placeholder {
    height: 66px;
    margin-bottom: 11px;
    padding-left: 6px;
    font-size: 28.500px;
    font-style: italic;
    line-height: 66px;
    color: #a3a3a3;
}
.widgets {
    display: grid;
    grid-template-columns: 422px 418px;
    grid-template-rows: 304px 307px;
}
.widget {
    position: relative;
    padding-left: 7px;
}
.widget-low {
    padding-top: 8px;
}
.widget-selected {
    box-shadow: inset 0 0 0 1.500px #7f9cc7;
}
.w-title {
    height: 24px;
    margin: 0 0 8px 3px;
    font-size: 17.500px;
    font-weight: 400;
    line-height: 24px;
    color: #111;
    white-space: nowrap;
}
.w-title-inset {
    margin-left: 10px;
}
.w-sub {
    display: flex;
    align-items: center;
    height: 14px;
}
.tree {
    width: 13px;
    height: 13px;
    color: #111;
    stroke-width: .9;
}
.w-filter {
    margin-left: 7px;
    padding-left: 7px;
    border-left: 1px solid #888;
    font-size: 13.500px;
    font-weight: 700;
    line-height: 15px;
    color: #3f6fb3;
}
.chart {
    display: block;
    position: absolute;
    left: 0;
    top: 49px;
    width: 100%;
    height: 250px;
    stroke: none;
    fill: #000;
}
.widget-low .chart {
    top: 57px;
}
.bar {
    fill: #7098d6;
    stroke: #a3bde8;
    stroke-width: 1;
}
.axis {
    fill: #000;
}
.cat,
.cat text {
    font: 15.500px "Noto Sans", Arial, sans-serif;
    fill: #aaa;
}
.cat-bar {
    font: 14px "Noto Sans", Arial, sans-serif;
    fill: #aaa;
}
.val,
.val text {
    font: 700 14px "Liberation Sans", Arial, sans-serif;
    fill: #555;
}
.small {
    font: 700 10.500px "Liberation Sans", Arial, sans-serif;
    fill: #555;
}
.legend {
    font: 14px "Noto Sans", Arial, sans-serif;
    fill: #555;
}
.end {
    text-anchor: end;
}
.mid,
.mid text {
    text-anchor: middle;
}
.var-line {
    stroke: #8bd05f;
    stroke-width: 2;
}
.var-head {
    fill: #8bd05f;
}
.var-drop {
    stroke: #888;
    stroke-width: 1;
}
.sep {
    stroke: #ddd;
    stroke-width: 1;
}
.leg-blue,
.line-blue {
    fill: none;
    stroke: #7098d6;
    stroke-width: 2.500;
}
.leg-orange,
.line-orange {
    fill: none;
    stroke: #c8703a;
    stroke-width: 2.500;
}
.pt-blue {
    fill: #7098d6;
}
.pt-orange {
    fill: #c8703a;
}
.grab {
    stroke: #46608a;
    stroke-width: 1;
}
.grab-fill {
    fill: #5a7aab;
    opacity: .7;
}
.w-more {
    position: absolute;
    left: 421px;
    top: 1px;
    width: 46px;
    height: 46px;
    padding: 0;
    border: 0;
    border-radius: 50%;
    background: #fff;
    color: #46608a;
    box-shadow: 0 1px 6px rgba(0, 0, 0, .3);
}
.w-more svg {
    display: block;
    width: 20px;
    height: 6px;
    margin: 0 auto;
}
.hscroll {
    height: 16px;
    padding-top: 2px;
    background: #fff;
}
.hscroll-thumb {
    width: 1036px;
    height: 14px;
    background: #aaa;
}

/* builder panel */
.builder {
    position: absolute;
    left: 1405px;
    top: 127px;
    right: 0;
    bottom: 0;
    background: #fff;
    box-shadow: -2px 0 5px rgba(0, 0, 0, .2);
}
.b-head {
    display: flex;
    align-items: center;
    height: 47px;
    padding-left: 25px;
    background: #5a7aab;
    color: #fff;
}
.b-tools {
    width: 20px;
    height: 20px;
}
.b-name {
    margin-left: 25px;
    font-size: 15px;
}
.b-brush {
    display: flex;
    align-items: center;
    justify-content: center;
    width: 70px;
    height: 47px;
    margin-left: auto;
    background: #46608a;
}
.b-brush svg {
    width: 20px;
    height: 20px;
}
.b-body {
    padding: 33px 60px 0 64px;
    color: #555;
}
.b-types {
    display: grid;
    grid-template-columns: repeat(3, 140px);
    grid-auto-rows: 82px;
}
.b-type {
    height: 82px;
    font-size: 15px;
    line-height: 20px;
}
.b-pick {
    display: flex;
    align-items: center;
    justify-content: center;
    gap: 4px;
    width: 58px;
    height: 46px;
    margin-top: 4px;
    background: #fff;
    border: 1px solid #e3e3e3;
    border-radius: 3px;
    color: #46608a;
}
.b-pick svg {
    width: 24px;
    height: 24px;
    stroke-width: 1.300;
}
.b-pick .wide {
    width: 27px;
}
.b-pick .chev {
    width: 12px;
    height: 8px;
    stroke-width: 1;
}
.b-pick-on {
    background: #d3e0f2;
    border-color: #5a7aab;
}
.b-rec {
    display: flex;
    align-items: center;
    width: 420px;
    height: 32px;
    margin-top: 21px;
    padding: 0 14px;
    background: #f7f7f7;
    border: 1px solid #dcdcdc;
    border-radius: 2px;
    font-size: 15.500px;
    color: #46608a;
}
.b-bulb {
    width: 14px;
    height: 19px;
    margin-right: 13px;
    color: #555;
}
.b-rec-chev {
    width: 14px;
    height: 9px;
    margin-left: auto;
}
.b-h {
    margin: 0;
    height: 20px;
    font-size: 15px;
    font-weight: 600;
    line-height: 20px;
    color: #222;
}
.b-h-measures {
    margin-top: 20px;
}
.b-sub {
    height: 20px;
    font-size: 15px;
    line-height: 20px;
}
.b-sub-left {
    margin-top: 10px;
    margin-bottom: 4px;
}
.b-sub-right {
    margin-top: 20px;
}
.chip {
    display: flex;
    align-items: center;
    width: 420px;
    height: 33px;
    padding: 0 7px 0 8px;
    background: #f7f7f7;
    border: 1px solid #e0e0e0;
    border-radius: 2px;
    font-size: 15.500px;
    color: #46608a;
}
.chip-next {
    margin-top: 4px;
}
.grip {
    width: 4px;
    height: 16px;
    margin-right: 18px;
    fill: #46608a;
    stroke: none;
}
.chip-x {
    width: 20px;
    height: 20px;
    margin-left: auto;
}
.b-add {
    display: flex;
    align-items: center;
    gap: 6px;
    height: 18px;
    margin-left: 6px;
    margin-top: 9px;
    font-size: 13.500px;
    color: #46608a;
}
.b-add svg {
    width: 13px;
    height: 13px;
}
.b-add-right {
    margin-top: 8px;
}
.b-h-dim {
    margin-top: 21px;
    margin-bottom: 9px;
}
.b-h-color {
    margin-top: 21px;
    margin-bottom: 10px;
}
.color-box {
    width: 420px;
    height: 129px;
    padding: 7px 8px 0 10px;
    background: #f7f7f7;
    border: 1px solid #e0e0e0;
    border-radius: 2px;
    color: #46608a;
    font-size: 15px;
}
.color-head {
    display: flex;
    align-items: center;
    justify-content: space-between;
    height: 20px;
}
.color-up {
    width: 16px;
    height: 10px;
    transform: scaleY(-1);
    stroke-width: 1.500;
}
.color-cols,
.color-row {
    display: grid;
    grid-template-columns: 240px 82px auto;
}
.color-cols {
    height: 18px;
    margin-top: 6px;
    padding-left: 2px;
    font-size: 13px;
    line-height: 18px;
    color: #a5a5a5;
}
.color-row {
    align-items: center;
    height: 38px;
}
.color-row .c-pattern,
.color-row .c-color {
    display: flex;
    align-items: center;
    gap: 7px;
}
.color-cols .c-pattern {
    margin-left: 2px;
}
.color-cols .c-color {
    margin-left: 2px;
}
.color-row .c-pattern {
    padding-left: 6px;
}
.color-row .c-color {
    padding-left: 4px;
}
.dot {
    display: block;
    width: 18px;
    height: 18px;
    border-radius: 50%;
}
.dot-grey {
    background: #5f5f5f;
}
.dot-blue {
    background: #7098d6;
}
.dot-orange {
    background: #c8703a;
}
.b-add-last {
    margin-top: 9px;
}
.vscroll {
    position: absolute;
    top: 160px;
    right: 0;
    width: 13px;
    height: 515px;
    background: #aaa;
}

/* red callouts from the tutorial */
.mark {
    position: absolute;
    border: 4px solid #f44040;
    box-shadow: 0 1px 3px rgba(0, 0, 0, .45);
}
.mark-20 {
    left: 490px;
    top: 80px;
    width: 46px;
    height: 40px;
}
.mark-21 {
    left: 1605px;
    top: 229px;
    width: 66px;
    height: 54px;
}
.mark-22 {
    left: 1459px;
    top: 466px;
    width: 440px;
    height: 113px;
}
.mark-23 {
    left: 1459px;
    top: 702px;
    width: 440px;
    height: 52px;
}
.step {
    position: absolute;
    width: 55px;
    height: 55px;
    border-radius: 50%;
    background: #f44040;
    color: #fff;
    font: 38px/55px "Liberation Sans", Arial, sans-serif;
    text-align: center;
    box-shadow: 0 3px 4px rgba(0, 0, 0, .5);
}
.step-20 {
    left: 486px;
    top: 136px;
}
.step-21 {
    left: 1542px;
    top: 229px;
}
.step-22 {
    left: 1391px;
    top: 494px;
}
.step-23 {
    left: 1391px;
    top: 700px;
}
```
